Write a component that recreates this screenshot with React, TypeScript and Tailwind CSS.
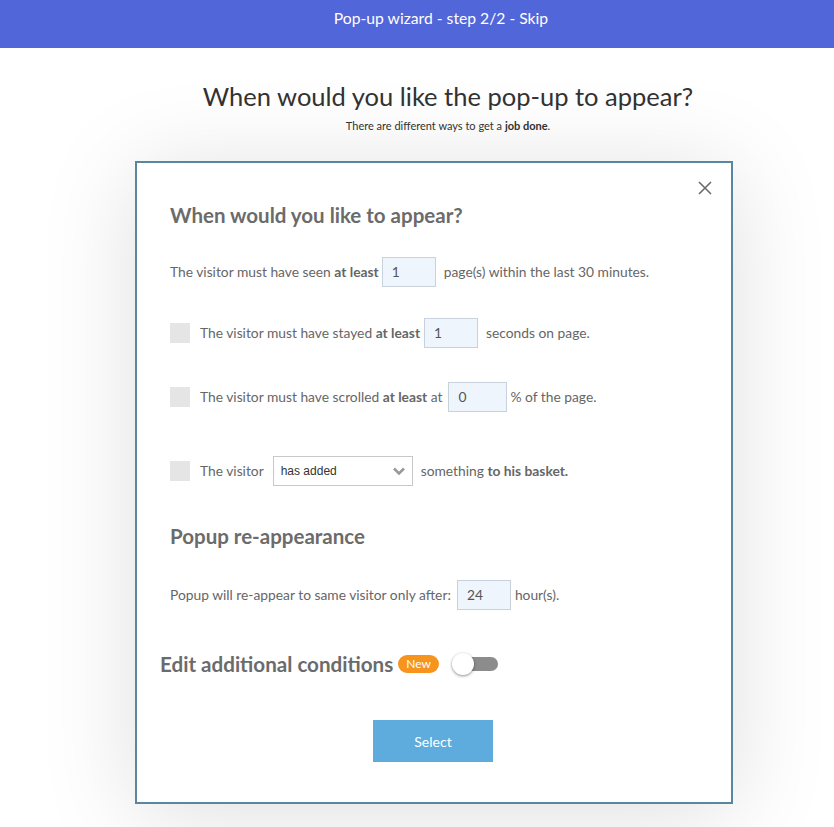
function NumberBox({ value, className = "" }: { value: string; className?: string }) {
  return (
    <span
      className={`inline-flex h-[30px] w-[54px] items-center border border-[#c8d2dc] bg-[#eef5fc] pl-[9px] text-[13.8px] text-[#555] ${className}`}
    >
      {value}
    </span>
  );
}

function Check() {
  return <span className="mr-[10px] inline-block h-[20px] w-[20px] shrink-0 bg-[#e5e5e5]" />;
}

export default function App() {
  return (
    <div className="min-h-[827px] bg-white font-['Lato','Open_Sans',sans-serif]">
      <div className="h-[48px] bg-[#5166d8] pl-12 pt-[7px] text-center text-[15.7px] text-white">
        Pop-up wizard - step 2/2 - Skip
      </div>

      <div className="pl-[62px] text-center text-[#333]">
        <h1 className="mt-[31px] text-[25.5px] leading-[34px]">When would you like the pop-up to appear?</h1>
        <p className="mt-[6px] text-[11px] leading-[14px]">
          There are different ways to get a <b>job done</b>.
        </p>
      </div>

      <div className="relative ml-[135px] mt-[28px] h-[643px] w-[598px] border-2 border-[#5a86a1] bg-white shadow-[0_10px_90px_rgba(0,0,0,0.13)]">
        <svg className="absolute right-[19px] top-[18px] h-[14px] w-[14px]" viewBox="0 0 14 14">
          <path d="M1 1L13 13M13 1L1 13" stroke="#6b6b6b" strokeWidth="1.6" />
        </svg>

        <div className="pl-[33px] pr-[30px] text-[13.8px] text-[#666]">
          <h2 className="pt-[39px] text-[20.5px] font-bold leading-[26px] text-[#6b6b6b]">When would you like to appear?</h2>

          <div className="mt-[29px] flex items-center">
            <span>
              The visitor must have seen <b>at least</b>
            </span>
            <NumberBox value="1" className="ml-[3px] mr-[8px]" />
            <span>page(s) within the last 30 minutes.</span>
          </div>

          <div className="mt-[31px] flex items-center">
            <Check />
            <span>
              The visitor must have stayed <b>at least</b>
            </span>
            <NumberBox value="1" className="ml-[4px] mr-[8px] w-[53px]" />
            <span>seconds on page.</span>
          </div>

          <div className="mt-[34px] flex items-center">
            <Check />
            <span>
              The visitor must have scrolled <b>at least</b> at
            </span>
            <NumberBox value="0" className="ml-[6px] mr-[3px] w-[59px]" />
            <span>% of the page.</span>
          </div>

          <div className="mt-[44px] flex items-center">
            <Check />
            <span>The visitor</span>
            <span className="ml-[9px] mr-[8px] flex h-[30px] w-[140px] items-center justify-between border border-[#c8c8c8] bg-white pl-[7px] pr-[6px] font-['Liberation_Sans',Arial,sans-serif] text-[12px] text-[#333]">
              has added
              <svg className="h-[10px] w-[14px]" viewBox="0 0 14 10">
                <path d="M2 2.5L7 7.5L12 2.5" fill="none" stroke="#999" strokeWidth="2.6" />
              </svg>
            </span>
            <span>
              something <b>to his basket.</b>
            </span>
          </div>

          <h2 className="mt-[37px] text-[20.5px] font-bold leading-[26px] text-[#6b6b6b]">Popup re-appearance</h2>

          <div className="mt-[31px] flex items-center">
            <span>Popup will re-appear to same visitor only after:</span>
            <NumberBox value="24" className="ml-[6px] mr-[4px]" />
            <span>hour(s).</span>
          </div>
        </div>

        <div className="mt-[41px] flex items-center pl-[23px]">
          <span className="text-[20.6px] font-bold leading-[26px] text-[#6b6b6b]">Edit additional conditions</span>
          <span className="ml-[5px] rounded-full bg-[#f7941d] px-[8px] py-[1px] text-[12px] leading-[16px] text-white">New</span>
          <span className="relative ml-[13px] flex h-[22px] w-[46px] items-center">
            <span className="ml-[9px] h-[14px] w-[37px] rounded-full bg-[#8c8c8c]" />
            <span className="absolute left-0 top-0 h-[22px] w-[22px] rounded-full bg-white shadow-[0_1px_3px_rgba(0,0,0,0.45)]" />
          </span>
        </div>

        <div className="mt-[43px] flex justify-center pr-[2px]">
          <button className="h-[42px] w-[120px] bg-[#5eabde] text-[14px] text-white">Select</button>
        </div>
      </div>
    </div>
  );
}
